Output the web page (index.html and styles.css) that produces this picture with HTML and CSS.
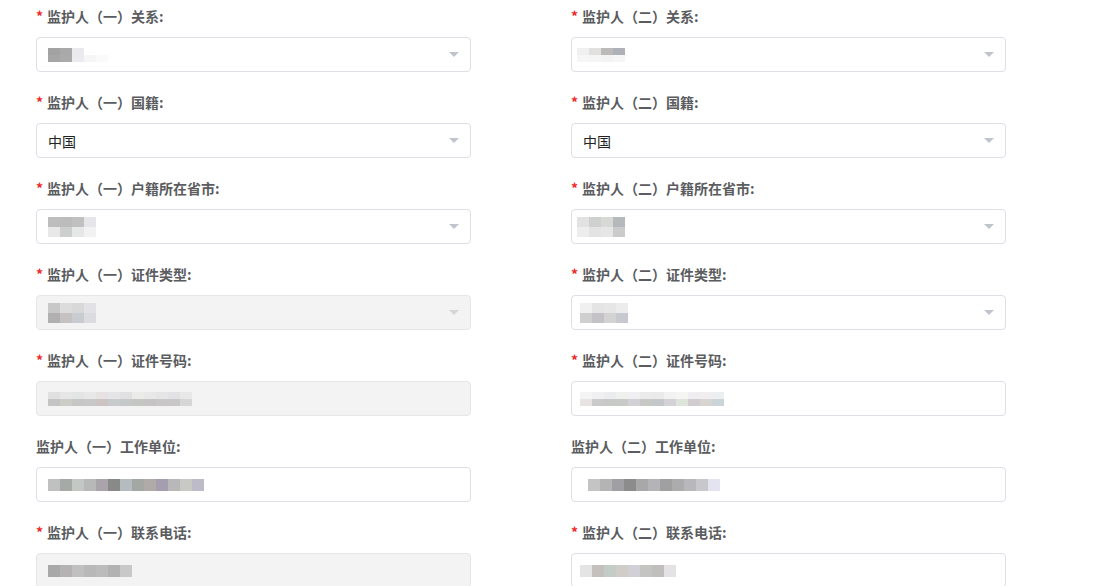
FILE: index.html
```html
<!DOCTYPE html>
<html lang="zh">
<head>
<meta charset="utf-8">
<link rel="stylesheet" href="styles.css">
</head>
<body>
<div class="form">
  <!-- row 1 -->
  <div class="item">
    <div class="label"><span class="req">*</span>监护人（一）关系:</div>
    <div class="input">
      <div class="mosaic m-sm">
        <div class="mrow"><i style="background:#a2a2a2"></i><i style="background:#a9a9a9"></i><i style="background:#e9e9ee"></i></div>
        <div class="mrow"><i style="background:#a6a6a6"></i><i style="background:#aaaaaa"></i><i style="background:#ebebef"></i><i style="background:#f6f6f6"></i><i style="background:#fafafa"></i></div>
      </div>
      <span class="arrow"></span>
    </div>
  </div>
  <div class="item">
    <div class="label"><span class="req">*</span>监护人（二）关系:</div>
    <div class="input">
      <div class="mosaic m-r">
        <div class="mrow"><i style="background:#f0f0f0"></i><i style="background:#e2dfdf"></i><i style="background:#bcbab8"></i><i style="background:#aeb2b8"></i></div>
        <div class="mrow"><i style="background:#f6f6f6"></i><i style="background:#f5f5f5"></i><i style="background:#f3f3f3"></i><i style="background:#f6f6f6"></i></div>
      </div>
      <span class="arrow"></span>
    </div>
  </div>

  <!-- row 2 -->
  <div class="item">
    <div class="label"><span class="req">*</span>监护人（一）国籍:</div>
    <div class="input"><span class="value">中国</span><span class="arrow"></span></div>
  </div>
  <div class="item">
    <div class="label"><span class="req">*</span>监护人（二）国籍:</div>
    <div class="input"><span class="value">中国</span><span class="arrow"></span></div>
  </div>

  <!-- row 3 -->
  <div class="item">
    <div class="label"><span class="req">*</span>监护人（一）户籍所在省市:</div>
    <div class="input">
      <div class="mosaic m-tall">
        <div class="mrow"><i style="background:#bdbdbd"></i><i style="background:#bcbcbc"></i><i style="background:#c0c0c0"></i><i style="background:#e6e6ea"></i></div>
        <div class="mrow"><i style="background:#e8e8e8"></i><i style="background:#cdcfcf"></i><i style="background:#e6e8e8"></i><i style="background:#f2f2f2"></i></div>
      </div>
      <span class="arrow"></span>
    </div>
  </div>
  <div class="item">
    <div class="label"><span class="req">*</span>监护人（二）户籍所在省市:</div>
    <div class="input">
      <div class="mosaic m-r m-tall">
        <div class="mrow"><i style="background:#e2e2e2"></i><i style="background:#cfd0d0"></i><i style="background:#d8d8d6"></i><i style="background:#b6b9bb"></i></div>
        <div class="mrow"><i style="background:#ededed"></i><i style="background:#e3e3e3"></i><i style="background:#e6e6e6"></i><i style="background:#cbcbcb"></i></div>
      </div>
      <span class="arrow"></span>
    </div>
  </div>

  <!-- row 4 -->
  <div class="item">
    <div class="label"><span class="req">*</span>监护人（一）证件类型:</div>
    <div class="input disabled">
      <div class="mosaic m-tall">
        <div class="mrow"><i style="background:#c8c8c8"></i><i style="background:#dcdcdc"></i><i style="background:#d8d8d8"></i><i style="background:#e2e2e6"></i></div>
        <div class="mrow"><i style="background:#b0b0b0"></i><i style="background:#c6c2c2"></i><i style="background:#c8ccd0"></i><i style="background:#dcdce0"></i></div>
      </div>
      <span class="arrow"></span>
    </div>
  </div>
  <div class="item">
    <div class="label"><span class="req">*</span>监护人（二）证件类型:</div>
    <div class="input">
      <div class="mosaic m-r2 m-tall">
        <div class="mrow"><i style="background:#f0f0f0"></i><i style="background:#e4e4e4"></i><i style="background:#e6e6e6"></i><i style="background:#ececec"></i></div>
        <div class="mrow"><i style="background:#cfcfcf"></i><i style="background:#c4c2c6"></i><i style="background:#d3d3d3"></i><i style="background:#c8c8d0"></i></div>
      </div>
      <span class="arrow"></span>
    </div>
  </div>

  <!-- row 5 -->
  <div class="item">
    <div class="label"><span class="req">*</span>监护人（一）证件号码:</div>
    <div class="input disabled">
      <div class="mosaic">
        <div class="mrow"><i style="background:#e0e0e0"></i><i style="background:#e6e6e6"></i><i style="background:#e3e5e5"></i><i style="background:#e8e8e8"></i><i style="background:#e6e2e4"></i><i style="background:#e5e5e7"></i><i style="background:#e0e0e2"></i><i style="background:#ebebea"></i><i style="background:#e8e8e9"></i><i style="background:#e5e5e5"></i><i style="background:#e2e2e4"></i><i style="background:#e8e8e8"></i></div>
        <div class="mrow"><i style="background:#c4c4c4"></i><i style="background:#cdcdc8"></i><i style="background:#c6c6c6"></i><i style="background:#c8c8c8"></i><i style="background:#ccc4c2"></i><i style="background:#c8cbcc"></i><i style="background:#c6c7c9"></i><i style="background:#c4c6c4"></i><i style="background:#c6c3c5"></i><i style="background:#c8c6c7"></i><i style="background:#c9c8c8"></i><i style="background:#d6d6d6"></i></div>
      </div>
    </div>
  </div>
  <div class="item">
    <div class="label"><span class="req">*</span>监护人（二）证件号码:</div>
    <div class="input">
      <div class="mosaic m-r2">
        <div class="mrow"><i style="background:#f4f4f4"></i><i style="background:#f0f0f2"></i><i style="background:#eaeced"></i><i style="background:#f0f0ee"></i><i style="background:#f0f0f2"></i><i style="background:#ebebeb"></i><i style="background:#eaeaeb"></i><i style="background:#f2f2f2"></i><i style="background:#f5f6f4"></i><i style="background:#eeeef0"></i><i style="background:#f0eeee"></i><i style="background:#eceef0"></i></div>
        <div class="mrow"><i style="background:#e8e4e4"></i><i style="background:#cacaca"></i><i style="background:#c8c8c6"></i><i style="background:#c8cac8"></i><i style="background:#d2d2d6"></i><i style="background:#c8c8c4"></i><i style="background:#c4c8ca"></i><i style="background:#d4d2d6"></i><i style="background:#dde4dc"></i><i style="background:#d0ccd0"></i><i style="background:#d8d4d2"></i><i style="background:#cbd4d8"></i></div>
      </div>
    </div>
  </div>

  <!-- row 6 -->
  <div class="item">
    <div class="label plain">监护人（一）工作单位:</div>
    <div class="input">
      <div class="mosaic m-one">
        <div class="mrow"><i style="background:#c0c0c0"></i><i style="background:#a6aaa6"></i><i style="background:#c4c8c4"></i><i style="background:#b8b8b8"></i><i style="background:#a8a4aa"></i><i style="background:#888a88"></i><i style="background:#b4bcbf"></i><i style="background:#a4a8a4"></i><i style="background:#b0aaa8"></i><i style="background:#a49eae"></i><i style="background:#b8b8b8"></i><i style="background:#c8c8c4"></i><i style="background:#bebbc8"></i></div>
      </div>
    </div>
  </div>
  <div class="item">
    <div class="label plain">监护人（二）工作单位:</div>
    <div class="input">
      <div class="mosaic m-one m-r3">
        <div class="mrow"><i style="background:#c4c4c4"></i><i style="background:#b4b4b4"></i><i style="background:#a0a0a4"></i><i style="background:#8c8c8c"></i><i style="background:#a8a8a8"></i><i style="background:#b4b4b8"></i><i style="background:#a0a0a0"></i><i style="background:#acacac"></i><i style="background:#b8b8bc"></i><i style="background:#c8c8cc"></i><i style="background:#e4e4f0"></i></div>
      </div>
    </div>
  </div>

  <!-- row 7 -->
  <div class="item">
    <div class="label"><span class="req">*</span>监护人（一）联系电话:</div>
    <div class="input disabled">
      <div class="mosaic m-one">
        <div class="mrow"><i style="background:#a8a8a8"></i><i style="background:#b4b2b2"></i><i style="background:#c0c0c0"></i><i style="background:#b8b8b8"></i><i style="background:#bcbcbc"></i><i style="background:#b2b2b2"></i><i style="background:#c8c8c8"></i></div>
      </div>
    </div>
  </div>
  <div class="item">
    <div class="label"><span class="req">*</span>监护人（二）联系电话:</div>
    <div class="input">
      <div class="mosaic m-one m-r2">
        <div class="mrow"><i style="background:#e4e4e4"></i><i style="background:#c4c0bc"></i><i style="background:#c4ccc8"></i><i style="background:#d0ccc8"></i><i style="background:#d0d0d6"></i><i style="background:#c4c4c0"></i><i style="background:#c0bfbe"></i><i style="background:#e4e2e4"></i></div>
      </div>
    </div>
  </div>
</div>
</body>
</html>
```

FILE: styles.css
```css
html, body {
  margin: 0;
  padding: 0;
  background: #ffffff;
  overflow: hidden;
}

body {
  width: 1110px;
  height: 586px;
  font-family: "Noto Sans CJK SC", "Noto Sans", sans-serif;
}

.form {
  display: grid;
  grid-template-columns: 435px 435px;
  column-gap: 100px;
  padding-left: 36px;
}

.item {
  display: flex;
  flex-direction: column;
  height: 86px;
}

.label {
  height: 32px;
  line-height: 32px;
  font-size: 14px;
  font-weight: bold;
  color: #5a5c60;
  margin-bottom: 5px;
  white-space: nowrap;
}

.req {
  color: #f02828;
  margin-right: 4px;
}

.input {
  position: relative;
  box-sizing: border-box;
  height: 35px;
  border: 1px solid #dcdfe6;
  border-radius: 4px;
  background: #ffffff;
  display: flex;
  align-items: center;
  padding-left: 11px;
}

.input.disabled {
  background: #f3f3f3;
  border-color: #e6e6e6;
}

.value {
  font-size: 14px;
  color: #222222;
}

.arrow {
  position: absolute;
  right: 11px;
  top: 14px;
  width: 0;
  height: 0;
  border-left: 5px solid transparent;
  border-right: 5px solid transparent;
  border-top: 5px solid #c0c4cc;
}

.input.disabled .arrow {
  border-top-color: #d4d6da;
}

.mosaic {
  display: flex;
  flex-direction: column;
}

.mrow {
  display: flex;
  height: 7px;
}

.mrow i {
  display: block;
  width: 12px;
  height: 100%;
}

.m-tall .mrow {
  height: 10px;
}

.m-one .mrow {
  height: 12px;
}

.m-sm .mrow {
  height: 7px;
}

.m-r {
  margin-left: -6px;
}

.m-r2 {
  margin-left: -3px;
}

.m-r3 {
  margin-left: 5px;
}
```
